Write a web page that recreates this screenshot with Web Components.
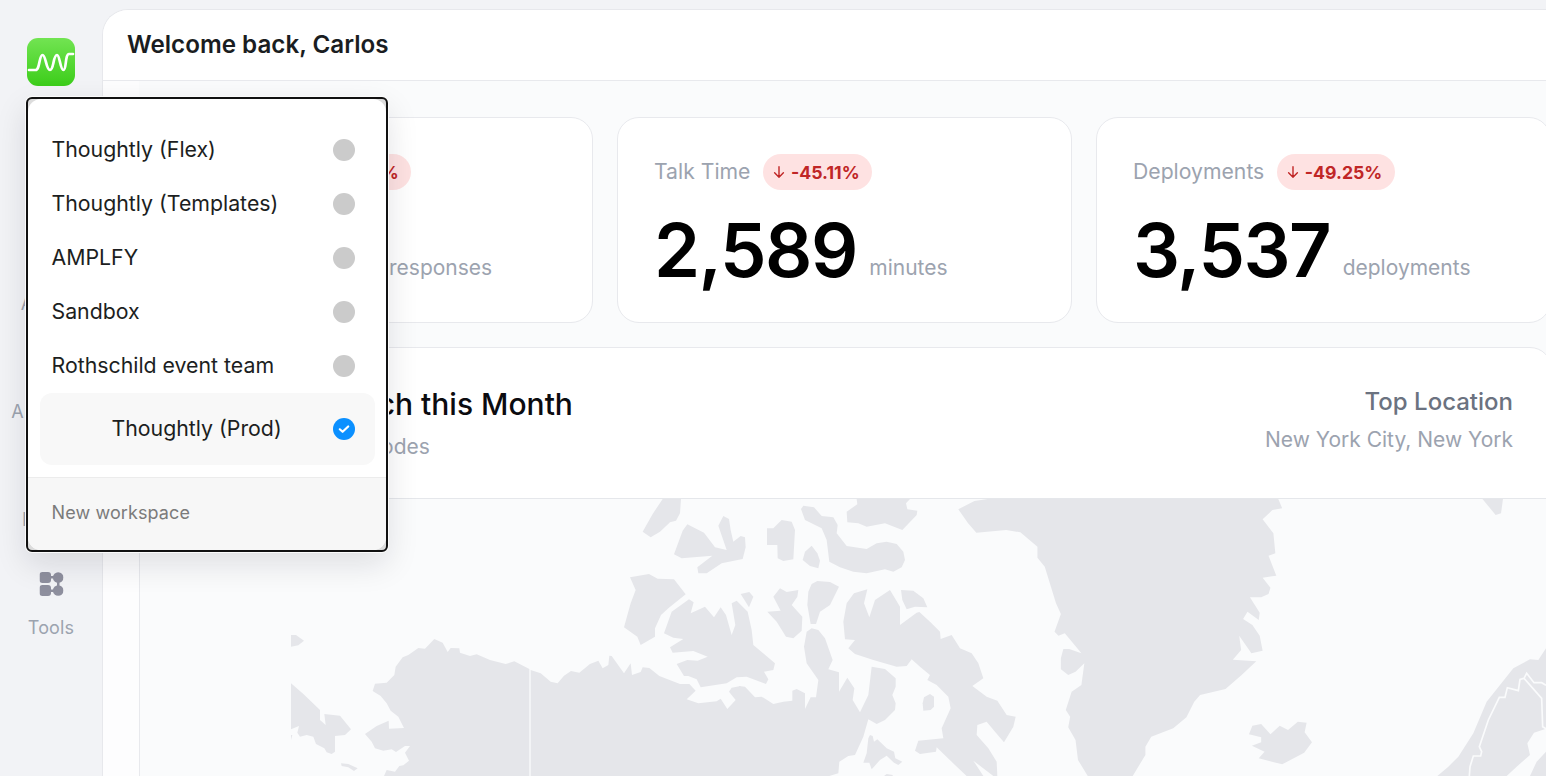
<!DOCTYPE html>
<html lang="en"><head><meta charset="utf-8"><title>Welcome back, Carlos</title>
<style>
html,body{margin:0;height:776px;overflow:hidden}
body{position:relative;background:#f2f3f6;font-family:Inter,"Liberation Sans",sans-serif;display:flex;width:1546px}
</style></head><body>
<side-bar>
  <nav-item label="Home"></nav-item>
  <nav-item label="Agents"></nav-item>
  <nav-item label="Analytics"></nav-item>
  <nav-item label="Insight"></nav-item>
  <nav-item label="Tools" tools></nav-item>
</side-bar>
<main-panel>
  <span slot="heading">Welcome back, Carlos</span>
  <stat-card label="Calls" delta="-32.18%" value="2,487" unit="responses" style="--label-w:111px"></stat-card>
  <stat-card label="Talk Time" delta="-45.11%" value="2,589" unit="minutes"></stat-card>
  <stat-card label="Deployments" delta="-49.25%" value="3,537" unit="deployments"></stat-card>
  <reach-map slot="map"></reach-map>
</main-panel>
<workspace-menu>
  <workspace-item>Thoughtly (Flex)</workspace-item>
  <workspace-item>Thoughtly (Templates)</workspace-item>
  <workspace-item>AMPLFY</workspace-item>
  <workspace-item>Sandbox</workspace-item>
  <workspace-item>Rothschild event team</workspace-item>
  <workspace-item selected>Thoughtly (Prod)</workspace-item>
</workspace-menu>
<script>
function shadow(el,html){el.attachShadow({mode:'open'}).innerHTML=html;}
customElements.define('side-bar',class extends HTMLElement{constructor(){super();shadow(this,`<style>
:host{display:flex;flex-direction:column;align-items:center;width:103px;flex:none;box-sizing:border-box;padding-top:38px;gap:0;margin-right:-1px}
.logo{width:48px;height:48px;margin-bottom:54px;display:block;margin-right:1px}
</style>
<svg class="logo" viewBox="27 38 48 48"><defs><linearGradient id="g" x1="0" y1="0" x2="0" y2="1"><stop offset="0" stop-color="#72e452"/><stop offset="1" stop-color="#3ccd1a"/></linearGradient></defs>
<rect x="27" y="38" width="48" height="48" rx="11" fill="url(#g)"/>
<path d="M29 70H35.500C40 70 39 55 42.500 55C46 55 46 70 50 70C54 70 53 55 57 55C60 55 60 70 63.500 70C66.500 70 65 54 69 54H73" fill="none" stroke="#fff" stroke-width="2.700" stroke-linecap="round"/></svg>
<slot></slot>`);}});
customElements.define('nav-item',class extends HTMLElement{connectedCallback(){if(this.shadowRoot)return;shadow(this,`<style>
:host{display:flex;flex-direction:column;align-items:center;height:108px;width:100%;font-size:18px;color:#9ca3af;box-sizing:border-box;transform:translateX(-.5px)}
svg{width:24px;height:24px;display:block;margin-bottom:21px;flex:none}
span{line-height:22px;white-space:nowrap;letter-spacing:.15px}
</style>
<svg viewBox="0 0 24 24" fill="#8e8f9e"><rect x="0" y="0" width="11.500" height="11" rx="3"/><rect x="0" y="13" width="11.500" height="11" rx="3"/><circle cx="18.700" cy="5.500" r="5.300"/><circle cx="18.700" cy="18.500" r="5.300"/><rect x="10" y="4" width="5" height="2.500"/><rect x="10" y="17.500" width="5" height="2.500"/><rect x="17.500" y="9" width="2.500" height="6"/></svg>
<span>${this.getAttribute('label')}</span>`);}});
customElements.define('main-panel',class extends HTMLElement{constructor(){super();shadow(this,`<style>
:host{display:flex;flex-direction:column;flex:none;width:1500px;height:800px;margin-top:9px;background:#fafbfc;border:1px solid #e7e8ec;border-right:0;border-top-left-radius:26px;overflow:hidden;box-sizing:border-box}
header{height:68px;flex:none;background:#fff;border-bottom:1px solid #e8e9ed;padding:0 0 2px 24px;display:flex;align-items:center;font-size:24.200px;font-weight:600;color:#1a1d21;box-sizing:content-box}
.content{padding:36px 0 0 35px;display:flex;flex-direction:column;gap:24px;background:linear-gradient(to right,#fdfdfe 36px,#fafbfc 36px)}
.cards{display:grid;grid-template-columns:repeat(3,455px);gap:24px}
</style>
<header><slot name="heading"></slot></header>
<div class="content"><div class="cards"><slot></slot></div><slot name="map"></slot></div>`);}});
customElements.define('stat-card',class extends HTMLElement{connectedCallback(){if(this.shadowRoot)return;const a=n=>this.getAttribute(n);shadow(this,`<style>
:host{display:block;box-sizing:border-box;height:206px;background:#fff;border:1px solid #e8e9ed;border-radius:22px;padding:36px 36px 0 36px}
.top{display:flex;align-items:center;gap:12.500px;height:36px}
.label{font-size:21.200px;color:#9ca3af;min-width:var(--label-w,auto);white-space:nowrap;position:relative;top:-1px}
.badge{display:flex;align-items:center;height:36px;border-radius:18px;background:#fee2e2;color:#c02626;font-size:17.700px;font-weight:700;padding:0 12.500px 0 8px;gap:4px;white-space:nowrap}
.badge svg{width:16px;height:16px;flex:none}
.row{display:flex;align-items:baseline;gap:12.500px;margin-top:20px;height:80px}
.val{font-size:74px;font-weight:600;line-height:80px;color:#000;letter-spacing:-1.500px}
.unit{font-size:21px;color:#9ca3af;position:relative;top:-2px}
</style>
<div class="top"><span class="label">${a('label')}</span><span class="badge"><svg viewBox="0 0 16 16" fill="none" stroke="#c02626" stroke-width="1.400" stroke-linecap="round" stroke-linejoin="round"><path d="M8 2.800v10.400M3.600 8.800L8 13.200l4.400-4.400"/></svg>${a('delta')}</span></div>
<div class="row"><span class="val">${a('value')}</span><span class="unit">${a('unit')}</span></div>`);}});
customElements.define('reach-map',class extends HTMLElement{constructor(){super();
const Z3='translate(280,490) scale(.33333)',Z6='translate(740,490) scale(.33333)',Z4='translate(780,490) scale(.48850,.33333)',Z7='translate(1330,620) scale(.33333)';
const p=a=>a.map(s=>`<polygon points="${s}"/>`).join('');
shadow(this,`<style>
:host{display:block;box-sizing:border-box;background:#fff;border:1px solid #e8e9ed;border-radius:22px 22px 0 0;height:440px;overflow:hidden;width:1413px;margin-left:1px}
.head{height:151px;box-sizing:border-box;border-bottom:1px solid #e5e7eb;display:flex;justify-content:space-between;padding:0 38px 0 35px}
.l{padding-top:36px}
h2{margin:0 0 0 4px;font-size:30px;line-height:40px;font-weight:500;color:#0b0b0f;white-space:nowrap}
.s{font-size:21px;line-height:28px;color:#9ca3af;margin-top:9px}
.r{text-align:right;padding-top:38px}
.t{font-size:24px;line-height:32px;font-weight:500;color:#6b7280}
.u{font-size:21px;line-height:28px;color:#9ca3af;margin-top:8px}
svg{display:block;background:#fafbfc}
</style>
<div class="head"><div class="l"><h2>Your USA Reach this Month</h2><div class="s">Across 117 US area codes</div></div><div class="r"><div class="t">Top Location</div><div class="u">New York City, New York</div></div></div>
<svg width="1411" height="277" viewBox="140 499 1411 277"><g fill="#e5e6ea">
<g transform="${Z3}">${p([
'33,435 48,435 72,452 55,466 33,470',
'33,580 70,612 120,660 120,690 137,705 133,672 180,677 213,718 195,735 165,738 165,785 155,792 140,787 133,775 108,762 100,740 80,735 60,740 52,728 57,708 33,718',
'33,735 37,735 33,750',
'183,820 205,822 233,835 222,843 205,832 185,828',
'748,537 703,514 677,522 630,510 590,493 570,498 540,488 538,475 512,474 503,486 488,458 463,447 435,476 415,474 385,495 368,502 347,530 343,555 320,578 285,581 278,603 302,618 320,640 332,662 355,680 372,714 327,716 326,692 290,708 255,732 275,755 285,775 310,782 335,778 348,786 375,768 390,768 375,788 387,812 370,826 358,828 345,845 320,840 312,858 748,858',
'752,540 782,550 812,575 833,580 852,557 873,543 898,548 930,522 955,512 968,535 985,525 988,497 995,498 1032,550 1052,520 1056,555 1082,546 1088,532 1108,534 1138,558 1200,582 1228,582 1247,602 1220,628 1255,640 1310,634 1322,626 1342,657 1367,630 1347,605 1355,593 1382,588 1382,858 752,858',
'1148,27 1203,27 1200,70 1188,92 1170,97 1140,125 1112,142 1088,125 1118,72',
'1222,103 1272,128 1305,172 1340,180 1315,107 1330,78 1347,87 1352,120 1360,155 1382,138 1395,142 1397,172 1388,207 1325,220 1280,250 1255,250 1252,232 1297,197 1205,205 1182,193 1208,122',
'1050,262 1107,252 1133,266 1182,268 1217,313 1165,355 1143,375 1125,415 1125,440 1082,465 1072,440 1032,412 1052,340 1067,300',
'1227,328 1241,337 1232,370 1275,350 1302,382 1322,352 1338,375 1355,435 1366,405 1355,340 1370,332 1403,365 1415,420 1420,465 1485,520 1480,540 1452,545 1465,568 1458,582 1400,560 1370,562 1340,580 1262,592 1250,568 1225,558 1212,558 1190,522 1222,510 1253,512 1283,500 1240,483 1178,488 1170,472 1210,447 1180,443 1152,430 1175,365',
'1382,312 1408,306 1420,320 1407,352'
])}</g>
<g transform="${Z6}">${p([
'81,115 100,115 125,90 155,95 165,120 160,208 130,213 113,205 112,165 81,165',
'183,57 190,47 222,52 245,78 280,82 293,105 290,130 320,168 380,177 410,160 440,155 470,162 490,185 495,210 485,232 460,245 435,238 380,250 340,245 300,232 268,215 260,150 245,115 195,90',
'350,27 510,27 498,40 502,58 532,62 530,75 487,120 435,100 380,110 355,100 322,97 320,65 352,43',
'215,167 232,190 240,212 235,235 210,228 188,210 195,185',
'215,282 232,273 270,276 297,290 270,345 240,365 228,402 212,402 202,345 205,305',
'120,295 140,306 175,300 172,320 155,345 187,380 185,422 160,445 138,440 110,395 82,365 122,362 100,320',
'-3,588 15,590 45,622 65,620 100,642 130,635 157,632 157,602 170,597 195,610 195,657 212,622 228,622 235,570 200,520 192,470 200,425 215,415 235,420 255,445 278,510 265,538 297,547 297,605 322,563 343,595 338,630 360,667 385,615 395,530 435,537 467,565 467,590 457,615 467,640 465,660 435,690 410,702 385,688 370,740 345,795 325,798 298,815 295,850 268,858 -3,858',
'390,735 398,738 402,755 412,748 440,775 462,785 466,805 487,815 475,825 462,818 440,797 420,810 395,838 388,818 370,818 380,790 385,745',
'432,858 440,852 458,855 458,858',
'342,310 382,298 372,340 388,382 405,330 450,300 480,350 480,405 530,368 538,366 570,395 600,425 602,447 635,435 660,475 695,490 715,520 730,565 697,588 740,620 772,632 800,675 827,680 820,710 792,757 765,725 740,695 712,705 710,735 745,775 770,815 772,858 760,858 700,812 730,858 680,858 645,825 590,772 588,785 540,792 525,782 535,752 610,745 605,715 632,655 625,620 590,585 562,570 570,555 540,530 515,508 500,528 470,530 400,510 345,492 325,475 345,450 315,448 310,395 320,340',
'570,612 582,620 582,650 572,660 550,662 548,640 552,622',
'483,300 520,302 550,325 562,352 525,350 500,358 487,330'
])}</g>
<g transform="${Z4}">${p([
'365,58 398,33 425,27 1020,27 1028,55 1008,60 988,88 1010,130 1014,190 1000,197 1016,257 988,263 1004,293 1000,312 985,322 962,322 982,368 980,390 957,365 948,387 967,405 982,437 988,482 965,490 940,437 944,480 927,509 975,514 945,555 912,597 860,615 848,635 832,682 805,715 760,740 748,770 748,795 722,858 630,858 610,810 605,750 590,712 594,680 585,660 597,605 617,585 623,520 605,545 590,555 575,538 575,505 580,477 592,477 617,490 583,430 570,437 562,425 575,372 565,340 542,230 527,203 527,170 492,127 463,120 402,128 385,100',
'960,733 967,707 985,702 1004,733 1023,707 1040,720 1060,695 1078,698 1074,727 1089,757 1073,788 1028,823 980,805 992,785 966,767 985,757 985,742',
'1438,27 1480,27 1476,70 1465,75'
])}</g>
<g transform="${Z7}">
<polygon points="322,468 355,440 385,410 430,340 470,245 510,195 550,145 600,118 625,120 648,85 648,468"/>
<polygon fill="#fafbfc" points="648,326 612,338 592,370 600,405 560,440 530,468 600,468 620,425 648,395"/>
<polyline fill="none" stroke="#fafbfc" stroke-width="5" points="418,468 420,440 430,408 452,408 455,395 448,380 475,300 508,232 525,232 532,203 565,212 570,178 582,175 590,160 612,188 635,188 648,196"/>
<polyline fill="none" stroke="#fafbfc" stroke-width="5" points="582,175 635,235 638,320 648,326"/>
</g></g></svg>`);}});
customElements.define('workspace-menu',class extends HTMLElement{constructor(){super();shadow(this,`<style>
:host{position:absolute;left:26px;top:97px;width:362px;height:455px;box-sizing:border-box;border:2.500px solid #111;border-radius:6px;background:#dcdcdc;box-shadow:0 0 0 1px #fbfbfb,0 12px 32px rgba(20,20,30,.12)}
.in{height:100%;border-radius:13px;overflow:hidden;background:#fff;display:flex;flex-direction:column}
.list{flex:none;height:377.500px;box-sizing:border-box;padding:23.500px 11.500px 0;display:flex;flex-direction:column}
.foot{flex:1;background:#f7f7f7;border-top:1px solid #ececec;padding-left:23.500px;display:flex;align-items:center;font-size:18px;color:#7b7b7b;padding-bottom:2px;letter-spacing:.1px}
</style><div class="in"><div class="list"><slot></slot></div><div class="foot">New workspace</div></div>`);}});
customElements.define('workspace-item',class extends HTMLElement{connectedCallback(){if(this.shadowRoot)return;const sel=this.hasAttribute('selected');shadow(this,`<style>
:host{display:flex;align-items:center;justify-content:space-between;height:54px;font-size:21.300px;color:#1c1e21;padding:0 20px 0 12px;box-sizing:border-box;flex:none;white-space:nowrap}
:host([selected]){height:72px;background:#f8f8f8;border-radius:12px;padding-left:72px}
.d{width:22px;height:22px;border-radius:50%;background:#cbcbcb;flex:none}
svg{display:block;width:22px;height:22px;flex:none}
span{position:relative;top:-1px}
</style><span><slot></slot></span>${sel?`<svg viewBox="0 0 22 22"><circle cx="11" cy="11" r="11" fill="#0b90ff"/><path d="M6.800 11.300l2.800 2.500 5.600-5.300" fill="none" stroke="#fff" stroke-width="2.200" stroke-linecap="round" stroke-linejoin="round"/></svg>`:'<div class="d"></div>'}`);}});
</script>
</body></html>
